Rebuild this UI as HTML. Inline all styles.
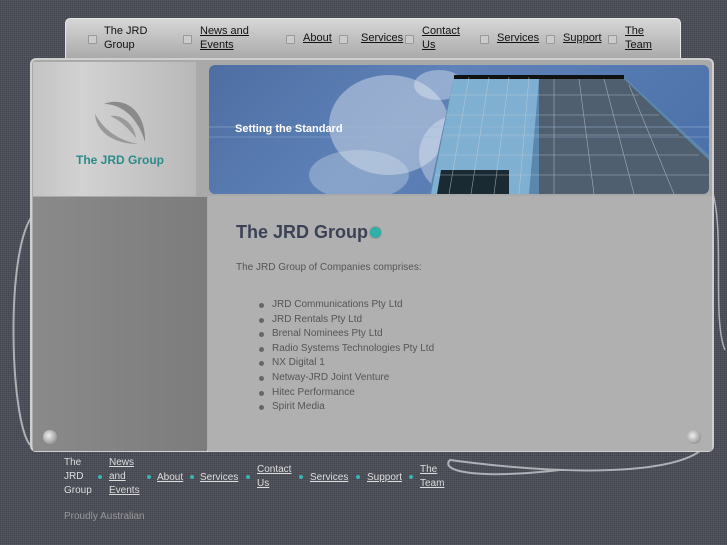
<!DOCTYPE html>
<html><head><style>
body{margin:0;width:727px;height:545px;overflow:hidden;background:#4b4e59;background-image:repeating-linear-gradient(0deg,rgba(255,255,255,.06) 0 1px,transparent 1px 2px),repeating-linear-gradient(90deg,rgba(0,0,0,.12) 0 1px,transparent 1px 2px);font-family:"Liberation Sans",sans-serif;position:relative}
.a{position:absolute}
.nav{left:65px;top:18px;width:614px;height:40px;background:linear-gradient(#d6d6d6,#a9a9a9);border:1px solid #e8e8e8;border-radius:5px 5px 0 0;font-size:11px;color:#111}
.nav span,.foot span{position:absolute;line-height:14px}
.nav u,.foot u{text-decoration:underline}
.b{position:absolute;width:7px;height:7px;background:#ccc;border:1px solid #999;border-radius:1px}
.panel{left:30px;top:58px;width:684px;height:394px;background:#a9a9a9;border:2px solid #cfcfcf;border-radius:6px;box-sizing:border-box}
.content{left:208px;top:196px;width:504px;height:255px;background:#b0b0b0}
.logo{left:33px;top:62px;width:163px;height:134px;background:linear-gradient(90deg,#c4c4c4,#d2d2d2 30%,#c0c0c0 80%,#b8b8b8)}
.lcol{left:33px;top:197px;width:174px;height:254px;background:linear-gradient(90deg,#8a8a8a,#7c7c7c)}
.banner{left:209px;top:65px;width:500px;height:129px;border-radius:6px;overflow:hidden;background:linear-gradient(135deg,#4d6ea3,#5e82b8 40%,#4a6fa8)}
ul{margin:0;padding:0;list-style:none}
li{position:relative;padding-left:36px;font-size:10px;color:#555;line-height:14.6px}
li:before{content:"";position:absolute;left:23px;top:5px;width:5px;height:5px;border-radius:50%;background:#666}
.foot{font-size:10px;color:#ddd}
.d{position:absolute;width:4px;height:4px;border-radius:50%;background:#3bb4b4}
</style></head><body>
<svg class="a" style="left:0;top:0" width="727" height="545"><path d="M33 215 C5 250,10 420,30 445" stroke="#aeb0b6" stroke-width="2" fill="none"/><path d="M708 440 C700 470,600 480,450 460 C440 470,470 480,560 470" stroke="#aeb0b6" stroke-width="2" fill="none"/><path d="M712 190 C725 230,712 320,725 350" stroke="#aeb0b6" stroke-width="1.5" fill="none"/></svg>
<div class="a nav">
<span class="b" style="left:22px;top:16px"></span><span style="left:38px;top:5px">The JRD<br>Group</span>
<span class="b" style="left:117px;top:16px"></span><span style="left:134px;top:5px"><u>News and<br>Events</u></span>
<span class="b" style="left:220px;top:16px"></span><span style="left:237px;top:12px"><u>About</u></span>
<span class="b" style="left:273px;top:16px"></span><span style="left:295px;top:12px"><u>Services</u></span>
<span class="b" style="left:339px;top:16px"></span><span style="left:356px;top:5px"><u>Contact<br>Us</u></span>
<span class="b" style="left:414px;top:16px"></span><span style="left:431px;top:12px"><u>Services</u></span>
<span class="b" style="left:480px;top:16px"></span><span style="left:497px;top:12px"><u>Support</u></span>
<span class="b" style="left:542px;top:16px"></span><span style="left:559px;top:5px"><u>The<br>Team</u></span>
</div>
<div class="a panel"></div>
<div class="a content"></div>
<div class="a logo"></div>
<svg class="a" style="left:92px;top:96px" width="58" height="52"><path d="M12 8 C32 0,54 14,53 46 C46 22,30 8,12 8Z" fill="#8a8a8a"/><path d="M3 18 C4 36,22 48,46 48 C26 44,12 34,3 18Z" fill="#999"/><path d="M18 20 C30 18,42 28,44 42 C36 32,28 24,18 20Z" fill="#9a9a9a"/></svg>
<div class="a" style="left:76px;top:153px;font-size:12px;font-weight:bold;color:#2c8a8a">The JRD Group</div>
<div class="a lcol"></div>
<div class="a banner">
<svg width="500" height="129" style="position:absolute;left:0;top:0">
<ellipse cx="180" cy="60" rx="60" ry="50" fill="#dfe7f0" opacity=".45"/><ellipse cx="250" cy="90" rx="40" ry="40" fill="#e4ebf3" opacity=".4"/><ellipse cx="150" cy="110" rx="50" ry="25" fill="#d8e1ec" opacity=".35"/><ellipse cx="230" cy="20" rx="25" ry="15" fill="#e8eef5" opacity=".4"/>
<polygon points="245,12 415,12 500,90 500,129 220,129" fill="#5b87ad"/>
<polygon points="245,12 330,14 320,129 222,129" fill="#7fb0d2"/>
<polygon points="330,14 415,14 500,95 500,129 330,129" fill="#4f5f70"/>
<polygon points="232,105 300,105 300,129 228,129" fill="#1a2a33"/>
<rect x="245" y="10" width="170" height="4" fill="#111"/>
<g stroke="#c8d0d8" stroke-width=".6" opacity=".7">
<line x1="260" y1="12" x2="240" y2="129"/><line x1="280" y1="12" x2="262" y2="129"/><line x1="300" y1="12" x2="285" y2="129"/><line x1="320" y1="12" x2="310" y2="129"/><line x1="345" y1="14" x2="345" y2="129"/><line x1="370" y1="14" x2="385" y2="129"/><line x1="395" y1="14" x2="425" y2="129"/><line x1="420" y1="20" x2="465" y2="129"/>
<line x1="240" y1="30" x2="430" y2="30"/><line x1="237" y1="50" x2="450" y2="50"/><line x1="234" y1="70" x2="470" y2="70"/><line x1="230" y1="90" x2="490" y2="90"/><line x1="226" y1="110" x2="500" y2="110"/></g>
<line x1="0" y1="62" x2="500" y2="62" stroke="#9fb8d8" opacity=".5"/><line x1="0" y1="72" x2="500" y2="72" stroke="#9fb8d8" opacity=".4"/>
</svg>
<div style="position:absolute;left:26px;top:58px;color:#fff;font-size:11px;font-weight:bold">Setting the Standard</div>
</div>
<div class="a" style="left:236px;top:222px;font-size:18px;font-weight:bold;color:#3c4256">The JRD Group</div>
<div class="a" style="left:369px;top:226px;width:11px;height:11px;border-radius:50%;background:#2fb0a8;border:1px solid #999"></div>
<div class="a" style="left:236px;top:262px;font-size:10px;color:#555">The JRD Group of Companies comprises:</div>
<ul class="a" style="left:236px;top:298px">
<li>JRD Communications Pty Ltd</li><li>JRD Rentals Pty Ltd</li><li>Brenal Nominees Pty Ltd</li><li>Radio Systems Technologies Pty Ltd</li><li>NX Digital 1</li><li>Netway-JRD Joint Venture</li><li>Hitec Performance</li><li>Spirit Media</li></ul>
<div class="a" style="left:43px;top:430px;width:14px;height:14px;border-radius:50%;background:radial-gradient(circle at 40% 40%,#eee,#777)"></div>
<div class="a" style="left:687px;top:430px;width:14px;height:14px;border-radius:50%;background:radial-gradient(circle at 40% 40%,#eee,#777)"></div>
<div class="a foot" style="left:0;top:2px;width:727px;height:543px">
<span style="left:64px;top:454px">The<br>JRD<br>Group</span><span class="d" style="left:98px;top:473px"></span>
<span style="left:109px;top:454px"><u>News<br>and<br>Events</u></span><span class="d" style="left:147px;top:473px"></span>
<span style="left:157px;top:469px"><u>About</u></span><span class="d" style="left:190px;top:473px"></span>
<span style="left:200px;top:469px"><u>Services</u></span><span class="d" style="left:246px;top:473px"></span>
<span style="left:257px;top:461px"><u>Contact<br>Us</u></span><span class="d" style="left:299px;top:473px"></span>
<span style="left:310px;top:469px"><u>Services</u></span><span class="d" style="left:356px;top:473px"></span>
<span style="left:367px;top:469px"><u>Support</u></span><span class="d" style="left:409px;top:473px"></span>
<span style="left:420px;top:461px"><u>The<br>Team</u></span>
<span style="left:64px;top:508px;color:#999">Proudly Australian</span>
</div>
</body></html>
